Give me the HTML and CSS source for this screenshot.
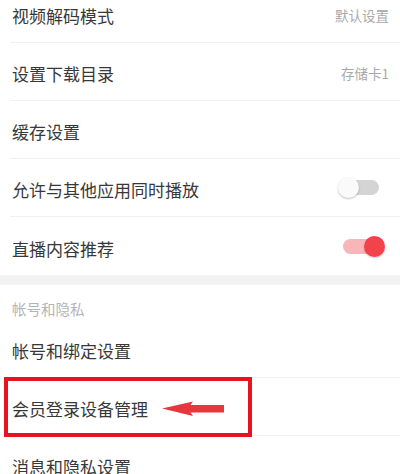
FILE: index.html
```html
<!DOCTYPE html>
<html lang="zh-CN">
<head>
<meta charset="utf-8">
<title>设置</title>
<link rel="stylesheet" href="styles.css">
</head>
<body>
<div class="page">
  <div class="group">
    <div class="row"><span class="label">视频解码模式</span><span class="value">默认设置</span></div>
    <div class="row"><span class="label">设置下载目录</span><span class="value">存储卡1</span></div>
    <div class="row"><span class="label">缓存设置</span></div>
    <div class="row"><span class="label">允许与其他应用同时播放</span><span class="switch"><span class="track"></span><span class="thumb"></span></span></div>
    <div class="row last"><span class="label">直播内容推荐</span><span class="switch on"><span class="track"></span><span class="thumb"></span></span></div>
  </div>
  <div class="band"></div>
  <div class="section-title">帐号和隐私</div>
  <div class="group">
    <div class="row"><span class="label">帐号和绑定设置</span></div>
    <div class="row marked">
      <span class="label">会员登录设备管理</span>
      <span class="highlight"></span>
      <svg class="arrow" width="62" height="16" viewBox="0 0 62 16"><polygon points="0,7.5 31,0.5 28.5,4 62,4 62,11.5 28.5,11.5 31,15" fill="#e8363f"/></svg>
    </div>
    <div class="row"><span class="label">消息和隐私设置</span></div>
  </div>
</div>
</body>
</html>
```

FILE: styles.css
```css
html, body {
  margin: 0;
  padding: 0;
  background: #fff;
}
body {
  width: 400px;
  height: 474px;
  overflow: hidden;
  font-family: "Noto Sans CJK SC", "Noto Sans", sans-serif;
  color: #383838;
}
.page {
  margin-top: -15px;
}
.row {
  position: relative;
  display: flex;
  align-items: center;
  justify-content: space-between;
  height: 58px;
  box-sizing: border-box;
  margin-left: 10px;
  padding-left: 2px;
  padding-right: 11px;
  border-bottom: 1px solid #f0f0f0;
}
.row.last {
  border-bottom: none;
}
.label {
  font-size: 17px;
  line-height: 24px;
  padding-top: 5px;
}
.value {
  font-size: 13.5px;
  line-height: 20px;
  padding-top: 2px;
  color: #a9a9a9;
}
.band {
  height: 10px;
  background: #f2f2f2;
}
.section-title {
  height: 35px;
  box-sizing: border-box;
  padding: 14px 0 0 12px;
  font-size: 14.5px;
  line-height: 20px;
  color: #b4b4b4;
}
.switch {
  position: relative;
  width: 47px;
  height: 21px;
  margin-right: 4px;
}
.switch .track {
  position: absolute;
  left: 5px;
  right: 6px;
  top: 3px;
  height: 15px;
  border-radius: 8px;
  background: #d4d4d4;
}
.switch .thumb {
  position: absolute;
  left: 0;
  top: 0;
  width: 21px;
  height: 21px;
  border-radius: 50%;
  background: #fafafa;
  box-shadow: 0 1px 2px rgba(0,0,0,0.25);
}
.switch.on .track {
  background: #f8b6b9;
}
.switch.on .thumb {
  left: auto;
  right: 0;
  background: #f2424b;
  box-shadow: 0 1px 2px rgba(180,0,0,0.25);
}
.highlight {
  position: absolute;
  left: -6px;
  top: -1px;
  width: 248px;
  height: 60px;
  box-sizing: border-box;
  border: 4px solid #e8131c;
}
.arrow {
  position: absolute;
  left: 152px;
  top: 23px;
}
```
